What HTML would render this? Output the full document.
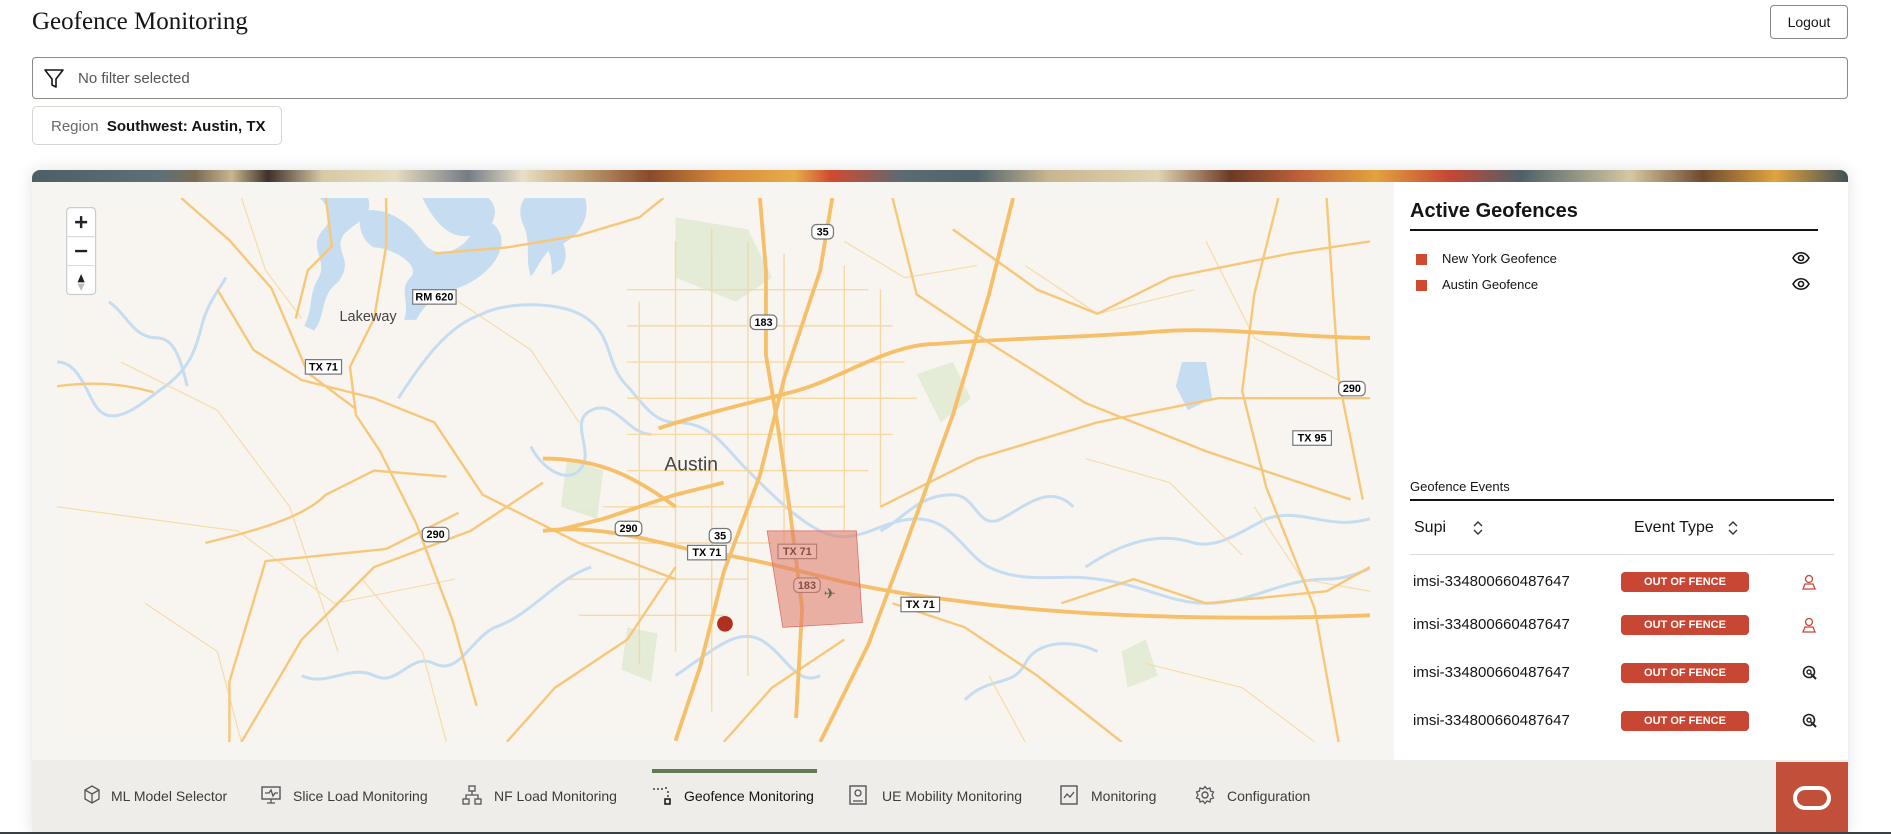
<!DOCTYPE html>
<html><head><meta charset="utf-8">
<style>
*{box-sizing:border-box;margin:0;padding:0}
body{width:1891px;height:834px;overflow:hidden;background:#fff;font-family:"Liberation Sans",sans-serif;position:relative;color:#161513}
.abs{position:absolute}
.title{left:32px;top:8px;font-family:"Liberation Serif",serif;font-size:25px;color:#161513}
.logout{left:1770px;top:5px;width:78px;height:34px;border:1px solid #8a8886;border-radius:4px;font-size:14px;display:flex;align-items:center;justify-content:center;background:#fff}
.filter{left:32px;top:57px;width:1816px;height:42px;border:1px solid #8d8b88;border-radius:4px;background:#fff}
.filter span{position:absolute;left:45px;top:12px;font-size:15px;color:#555}
.chip{left:32px;top:106px;width:250px;height:39px;border:1px solid #d9d6d2;border-radius:5px;font-size:15px;padding:11px 0 0 18px;white-space:nowrap}
.card{left:32px;top:170px;width:1816px;height:664px;border-radius:8px 8px 0 0;box-shadow:0 0 16px rgba(0,0,0,.12);overflow:hidden;background:#f7f5f2}
.strip{left:0;top:0;width:1816px;height:12px;background:linear-gradient(90deg,#4c5e66 0,#5d7078 7%,#7c6b54 9%,#c8b68f 11%,#3f302a 13%,#d8c9a6 16%,#e6dcc0 20%,#747c85 24%,#eadfc7 27%,#c1a47a 30%,#8a4a2a 34%,#d78a3a 38%,#e7ac48 42%,#d14a30 44%,#5a6b72 48%,#51646b 52%,#c9b68f 56%,#e0d3b2 62%,#6c3a26 66%,#c1623a 70%,#e3a33e 74%,#c74634 78%,#4e6168 82%,#d6c7a2 88%,#6f4a30 92%,#e2a43c 96%,#3f5159 100%)}
.side{left:1394px;top:182px;width:454px;height:578px;background:#fff}
.nav{left:32px;top:760px;width:1816px;height:72px;background:#efedea}
.bline{left:0;top:832px;width:1891px;height:2px;background:#3a3f42}
.tab{position:absolute;top:28px;font-size:14px;color:#3e3c39;white-space:nowrap}
.ic{position:absolute;top:25px}
.badge{position:absolute;left:1621px;width:128px;height:20px;background:#c74634;border-radius:4px;color:#fff;font-size:11px;font-weight:bold;display:flex;align-items:center;justify-content:center}
.imsi{position:absolute;left:1413px;font-size:15px;color:#161513}
</style></head><body>
<div class="abs title">Geofence Monitoring</div>
<div class="abs logout">Logout</div>
<div class="abs filter">
<svg class="abs" style="left:10px;top:10px" width="22" height="22" viewBox="0 0 22 22"><path d="M2 2h18l-7 9v8l-4 -2v-6z" fill="none" stroke="#161513" stroke-width="1.6" stroke-linejoin="round"/></svg>
<span>No filter selected</span></div>
<div class="abs chip"><span style="color:#6b6966">Region</span>&nbsp; <b style="font-weight:bold;color:#161513">Southwest: Austin, TX</b></div>

<div class="abs card">
<div class="abs strip"></div>
</div>

<svg class="abs" style="left:57px;top:198px" width="1313" height="544" viewBox="47 164 1089 451" preserveAspectRatio="none">
<rect x="47" y="164" width="1089" height="451" fill="#f8f5f1"/>
<g fill="#dfe9cf" opacity=".8">
<path d="M560 180 l60 10 l20 40 l-30 20 l-50 -20z"/><path d="M760 310 l30 -10 l15 30 l-25 20z"/><path d="M470 380 l30 10 l-5 40 l-30 -10z"/><path d="M930 540 l20 -10 l10 30 l-25 10z"/><path d="M520 520 l25 5 l-5 40 l-25 -10z"/>
</g>
<g fill="#c6dcf0">
<path d="M265 164 l40 0 c5 15 -10 20 -20 30 c-10 15 10 20 -5 40 c-15 10 -10 30 -20 40 l-8 -4 c8 -15 3 -25 12 -40 c8 -15 -10 -25 4 -40 c8 -8 5 -18 -3 -26z"/>
<path d="M300 175 c20 -5 40 10 50 25 c10 15 30 10 40 -5 c8 -15 20 -15 25 0 c5 20 -20 40 -40 45 c-15 5 -25 15 -30 25 l-10 0 c5 -15 -5 -25 5 -35 c10 -10 -15 -25 -30 -25 c-10 -5 -15 -20 -10 -30z"/>
<path d="M350 164 l55 0 c10 10 5 25 -10 30 c-15 5 -30 0 -45 -30z"/>
<path d="M435 164 l50 0 c5 15 -5 35 -25 40 c-10 5 -15 20 -20 25 c-5 -15 0 -25 -5 -40 c-5 -10 -5 -18 0 -25z"/>
<path d="M445 178 c20 15 30 30 20 45 l-8 5 c2 -15 -5 -30 -15 -40z"/>
<path d="M980 300 l20 0 l5 30 l-20 10 l-10 -20z"/>
</g>
<g fill="none" stroke="#c6dcf0" stroke-width="2.5">
<path d="M47 300 c20 0 25 30 35 40 c15 15 40 -10 55 -20 c20 -15 25 -30 30 -50 c5 -20 15 -30 20 -40"/>
<path d="M90 250 c15 10 20 30 40 30 c15 0 20 20 25 40"/>
<path d="M330 330 c20 -30 40 -60 70 -70 c20 -10 60 -10 80 0 c30 15 20 40 40 60 c10 10 20 30 40 30 c30 0 40 20 60 40 c20 20 40 40 60 50 c30 15 50 -10 80 -10 c30 0 40 30 60 40 c30 15 60 5 90 10 c40 5 60 20 90 20 c40 0 60 -20 100 -20 c30 0 50 -20 90 -30"/>
<path d="M440 370 c10 20 30 30 40 20 c15 -15 -10 -40 10 -50 c20 -10 30 20 50 20"/>
<path d="M250 560 c20 10 40 -10 60 0 c20 10 30 -20 50 -10 c20 10 30 -20 50 -30 c30 -10 50 -40 80 -50"/>
<path d="M560 560 c30 -20 50 -40 70 -30 c20 10 30 40 50 30"/>
<path d="M730 440 c20 -10 30 -30 60 -30 c20 0 20 30 40 20 c20 -10 40 -30 60 -10"/>
<path d="M900 470 c30 -20 60 -30 90 -20 c20 5 40 -10 60 -20 c30 -10 50 10 86 0"/>
<path d="M800 580 c20 -20 40 -10 50 -30 c10 -20 40 -20 60 -10"/>
</g>
<g fill="none" stroke="#f6dca8" stroke-width="1">
<path d="M47 420 l150 20 l80 60 l100 -20"/><path d="M100 300 l80 40 l60 80 l40 120"/><path d="M200 164 l20 60 l30 40"/><path d="M380 250 l60 40 l40 60"/><path d="M700 200 l50 30 l60 -10"/><path d="M850 220 l60 40 l80 -20"/><path d="M900 380 l70 20 l60 60"/><path d="M1000 200 l40 80 l80 40"/><path d="M950 550 l80 20 l60 45"/><path d="M120 500 l60 40 l20 75"/><path d="M300 480 l50 60 l20 75"/><path d="M820 560 l30 55"/><path d="M1040 420 l40 60 l56 10"/>
</g>
<g fill="none" stroke="#f7d79a" stroke-width="1.2" opacity=".9">
<path d="M520 240 h200 M520 270 h220 M520 300 h230 M520 330 h240 M520 360 h220 M520 390 h200 M500 420 h200 M480 450 h160 M470 480 h150 M480 510 h120"/>
<path d="M560 200 v340 M590 190 v400 M620 200 v360 M650 210 v250 M700 220 v220 M730 240 v180 M530 250 v300"/>
</g>
<g fill="none" stroke="#f7c77a" stroke-width="2">
<path d="M47 320 c40 -5 60 0 80 5 M180 240 l30 50 l40 25 l60 15 l50 20 l40 60 l80 40 l80 30"/>
<path d="M150 164 l40 35 l35 40 l30 70 l40 30"/>
<path d="M270 164 l5 40 l-20 20 l-10 40"/>
<path d="M320 164 l0 40 l-10 60 l-20 40 l5 40 l20 30 l30 60 l30 80 l20 71"/>
<path d="M360 210 l60 -5 l60 -10 l50 -15 l20 -16"/>
<path d="M170 450 c40 -10 80 -20 100 -40 l40 -20 l60 5"/>
<path d="M190 615 l0 -50 l30 -100 l100 -10 l60 -30"/>
<path d="M740 164 l20 80 l60 40 l80 50 l100 40 l120 40"/>
<path d="M790 190 l70 50 l50 20 l60 -30 l100 -20 l66 -10"/>
<path d="M730 420 l80 -40 l100 -30 l100 -20 l126 0"/>
<path d="M740 500 l60 20 l60 40 l70 55"/>
<path d="M700 530 l-60 40 l-40 45"/>
<path d="M560 470 l-40 60 l-60 40 l-40 45"/>
<path d="M450 400 l-60 40 l-80 30 l-60 60 l-50 85"/>
<path d="M880 500 l60 -20 l60 20 l100 -10 l36 -20"/>
<path d="M1100 164 l10 150 l20 100"/>
<path d="M1060 164 l-20 80 l-10 80 l20 80 l40 100 l20 111"/>
</g>
<g fill="none" stroke="#f6bf6a" stroke-width="3.2">
<path d="M690 164 l-10 60 l-30 90 l-20 80 l-30 80 l-20 80 l-20 60"/>
<path d="M630 164 l5 60 l0 70 l10 60 l10 70 l10 80 l-5 91"/>
<path d="M1136 280 c-60 0 -120 -10 -180 -5 c-60 5 -120 5 -180 10 c-40 0 -80 30 -120 40 c-40 10 -80 20 -110 30"/>
<path d="M450 440 c40 -5 80 5 120 15 c40 5 80 15 120 25 c40 10 80 15 120 20 c80 10 200 15 326 10"/>
<path d="M840 164 l-20 80 l-30 100 l-40 110 l-30 80 l-40 81"/>
<path d="M600 400 l-40 10 l-60 20 l-40 10"/>
<path d="M560 420 c-40 -30 -70 -40 -110 -40"/>
</g>
<g font-family="Liberation Sans,sans-serif" font-size="9" font-weight="bold" text-anchor="middle">
<g><rect x="342" y="240" width="36" height="12" fill="#fff" stroke="#777"/><text x="360" y="249">RM 620</text></g>
<g><rect x="253" y="298" width="30" height="12" fill="#fff" stroke="#777"/><text x="268" y="307">TX 71</text></g>
<g><rect x="570" y="452" width="32" height="12" fill="#fff" stroke="#777"/><text x="586" y="461">TX 71</text></g>
<g><rect x="645" y="451" width="32" height="12" fill="#fff" stroke="#777"/><text x="661" y="460">TX 71</text></g>
<g><rect x="747" y="495" width="32" height="12" fill="#fff" stroke="#777"/><text x="763" y="504">TX 71</text></g>
<g><rect x="1072" y="357" width="32" height="12" fill="#fff" stroke="#777"/><text x="1088" y="366">TX 95</text></g>
<g><rect x="350" y="437" width="22" height="12" rx="4" fill="#fff" stroke="#777"/><text x="361" y="446">290</text></g>
<g><rect x="510" y="432" width="22" height="12" rx="4" fill="#fff" stroke="#777"/><text x="521" y="441">290</text></g>
<g><rect x="1110" y="316" width="22" height="12" rx="4" fill="#fff" stroke="#777"/><text x="1121" y="325">290</text></g>
<g><rect x="622" y="261" width="22" height="12" rx="4" fill="#fff" stroke="#777"/><text x="633" y="270">183</text></g>
<g><rect x="658" y="479" width="22" height="12" rx="4" fill="#fff" stroke="#777"/><text x="669" y="488">183</text></g>
<g><rect x="673" y="186" width="18" height="12" rx="4" fill="#fff" stroke="#777"/><text x="682" y="195">35</text></g>
<g><rect x="588" y="438" width="18" height="12" rx="4" fill="#fff" stroke="#777"/><text x="597" y="447">35</text></g>
</g>
<text x="305" y="266" font-family="Liberation Sans,sans-serif" font-size="12" fill="#444" text-anchor="middle">Lakeway</text>
<text x="573" y="390" font-family="Liberation Sans,sans-serif" font-size="16" fill="#444" text-anchor="middle">Austin</text>
<polygon points="636,440 710,440 715,516 649,520" fill="#e0806e" fill-opacity=".6" stroke="#d66" stroke-width=".6"/>
<text x="688" y="496" font-size="12" fill="#665" text-anchor="middle">✈</text>
<circle cx="601" cy="517" r="6.5" fill="#b0301f"/>
<g>
<rect x="55" y="172" width="24" height="72" rx="3" fill="#fff" stroke="#ccc"/>
<line x1="55" y1="196" x2="79" y2="196" stroke="#ddd"/><line x1="55" y1="220" x2="79" y2="220" stroke="#ddd"/>
<path d="M62 184h10M67 179v10M62 208h10" stroke="#222" stroke-width="2"/>
<path d="M67 227l-3 7h6z" fill="#222"/><path d="M67 241l-3 -6h6z" fill="#bbb"/>
</g>
</svg>

<div class="abs side">
<div class="abs" style="left:16px;top:18px;font-size:20px;font-weight:bold">Active Geofences</div>
<div class="abs" style="left:16px;top:47px;width:408px;height:1.5px;background:#161513"></div>
<div class="abs" style="left:22px;top:72px;width:11px;height:11px;background:#d04a2f"></div>
<div class="abs" style="left:48px;top:69px;font-size:13px">New York Geofence</div>
<div class="abs" style="left:22px;top:98px;width:11px;height:11px;background:#d04a2f"></div>
<div class="abs" style="left:48px;top:95px;font-size:13px">Austin Geofence</div>
<svg class="abs" style="left:398px;top:69px" width="18" height="14" viewBox="0 0 18 14"><path d="M1 7c4-7 12-7 16 0c-4 7-12 7-16 0z" fill="none" stroke="#161513" stroke-width="1.6"/><circle cx="9" cy="7" r="2.5" fill="none" stroke="#161513" stroke-width="1.6"/></svg>
<svg class="abs" style="left:398px;top:95px" width="18" height="14" viewBox="0 0 18 14"><path d="M1 7c4-7 12-7 16 0c-4 7-12 7-16 0z" fill="none" stroke="#161513" stroke-width="1.6"/><circle cx="9" cy="7" r="2.5" fill="none" stroke="#161513" stroke-width="1.6"/></svg>
<div class="abs" style="left:16px;top:297px;font-size:13px">Geofence Events</div>
<div class="abs" style="left:16px;top:317px;width:424px;height:1.5px;background:#161513"></div>
<div class="abs" style="left:20px;top:337px;font-size:16px">Supi</div>
<svg class="abs" style="left:79px;top:338px" width="10" height="16" viewBox="0 0 10 16"><path d="M1 6l4-4l4 4M1 10l4 4l4-4" fill="none" stroke="#333" stroke-width="1.4"/></svg>
<div class="abs" style="left:240px;top:337px;font-size:16px">Event Type</div>
<svg class="abs" style="left:334px;top:338px" width="10" height="16" viewBox="0 0 10 16"><path d="M1 6l4-4l4 4M1 10l4 4l4-4" fill="none" stroke="#333" stroke-width="1.4"/></svg>
<div class="abs" style="left:16px;top:372px;width:424px;height:1px;background:#ddd"></div>
</div>
<div class="imsi" style="top:573px">imsi-334800660487647</div><div class="badge" style="top:572px">OUT OF FENCE</div>
<div class="imsi" style="top:616px">imsi-334800660487647</div><div class="badge" style="top:615px">OUT OF FENCE</div>
<div class="imsi" style="top:664px">imsi-334800660487647</div><div class="badge" style="top:663px">OUT OF FENCE</div>
<div class="imsi" style="top:712px">imsi-334800660487647</div><div class="badge" style="top:711px">OUT OF FENCE</div>
<svg class="abs" style="left:1802px;top:574px" width="14" height="16" viewBox="0 0 14 16"><circle cx="7" cy="5" r="3.5" fill="none" stroke="#c74634" stroke-width="1.3"/><path d="M1 15l2-5h8l2 5z" fill="none" stroke="#c74634" stroke-width="1.3"/></svg>
<svg class="abs" style="left:1802px;top:617px" width="14" height="16" viewBox="0 0 14 16"><circle cx="7" cy="5" r="3.5" fill="none" stroke="#c74634" stroke-width="1.3"/><path d="M1 15l2-5h8l2 5z" fill="none" stroke="#c74634" stroke-width="1.3"/></svg>
<svg class="abs" style="left:1802px;top:665px" width="15" height="15" viewBox="0 0 15 15"><circle cx="7" cy="7" r="5.5" fill="none" stroke="#222" stroke-width="1.6"/><circle cx="7" cy="7" r="2" fill="none" stroke="#222" stroke-width="1.4"/><path d="M9 9l5 5" stroke="#222" stroke-width="2"/></svg>
<svg class="abs" style="left:1802px;top:713px" width="15" height="15" viewBox="0 0 15 15"><circle cx="7" cy="7" r="5.5" fill="none" stroke="#222" stroke-width="1.6"/><circle cx="7" cy="7" r="2" fill="none" stroke="#222" stroke-width="1.4"/><path d="M9 9l5 5" stroke="#222" stroke-width="2"/></svg>

<div class="abs nav">
<div class="abs" style="left:620px;top:9px;width:165px;height:4px;background:#627a50"></div>
<svg class="ic" style="left:51px" width="18" height="20" viewBox="0 0 18 20"><path d="M9 1l7 4v9l-7 4l-7-4v-9z M2 5l7 4l7-4 M9 9v9" fill="none" stroke="#555" stroke-width="1.3"/></svg><div class="tab" style="left:79px">ML Model Selector</div>
<svg class="ic" style="left:229px" width="20" height="20" viewBox="0 0 20 20"><rect x="1" y="2" width="18" height="12" fill="none" stroke="#555" stroke-width="1.4"/><path d="M4 8h4l2-3l2 6l2-3h3M10 14v4M6 18h8" fill="none" stroke="#555" stroke-width="1.3"/></svg><div class="tab" style="left:261px">Slice Load Monitoring</div>
<svg class="ic" style="left:430px" width="20" height="20" viewBox="0 0 20 20"><rect x="7" y="1" width="6" height="5" fill="none" stroke="#555" stroke-width="1.3"/><rect x="1" y="14" width="6" height="5" fill="none" stroke="#555" stroke-width="1.3"/><rect x="13" y="14" width="6" height="5" fill="none" stroke="#555" stroke-width="1.3"/><path d="M10 6v4M4 14v-4h12v4" fill="none" stroke="#555" stroke-width="1.3"/></svg><div class="tab" style="left:462px">NF Load Monitoring</div>
<svg class="ic" style="left:620px" width="20" height="20" viewBox="0 0 20 20"><path d="M1 4h2M5 4h2M9 4h2M13 3l2 0M16 6v2M16 10v2" stroke="#222" stroke-width="1.3"/><rect x="13" y="14" width="5" height="5" fill="none" stroke="#111" stroke-width="1.5"/></svg><div class="tab" style="left:652px;color:#161513">Geofence Monitoring</div>
<svg class="ic" style="left:817px" width="18" height="20" viewBox="0 0 18 20"><rect x="1" y="1" width="16" height="18" fill="none" stroke="#555" stroke-width="1.4"/><circle cx="9" cy="8" r="3" fill="none" stroke="#555" stroke-width="1.3"/><path d="M4 16h10" stroke="#555" stroke-width="1.3"/></svg><div class="tab" style="left:850px">UE Mobility Monitoring</div>
<svg class="ic" style="left:1028px" width="18" height="20" viewBox="0 0 18 20"><rect x="1" y="1" width="16" height="18" fill="none" stroke="#555" stroke-width="1.4"/><path d="M4 13l3-4l3 3l4-5" fill="none" stroke="#555" stroke-width="1.3"/></svg><div class="tab" style="left:1059px">Monitoring</div>
<svg class="ic" style="left:1163px" width="20" height="20" viewBox="0 0 20 20"><circle cx="10" cy="10" r="3" fill="none" stroke="#555" stroke-width="1.4"/><path d="M10 1.5l2 2.5l3-1l.5 3l3 1l-1.5 3l1.5 3l-3 1l-.5 3l-3-1l-2 2.5l-2-2.5l-3 1l-.5-3l-3-1l1.5-3l-1.5-3l3-1l.5-3l3 1z" fill="none" stroke="#555" stroke-width="1.3"/></svg><div class="tab" style="left:1195px">Configuration</div>
</div>
<div class="abs" style="left:1776px;top:762px;width:72px;height:72px;background:#c24f3a"></div>
<div class="abs" style="left:1793px;top:786px;width:38px;height:24px;border:4px solid #fff;border-radius:12px"></div>
<div class="abs bline"></div>
</body></html>
